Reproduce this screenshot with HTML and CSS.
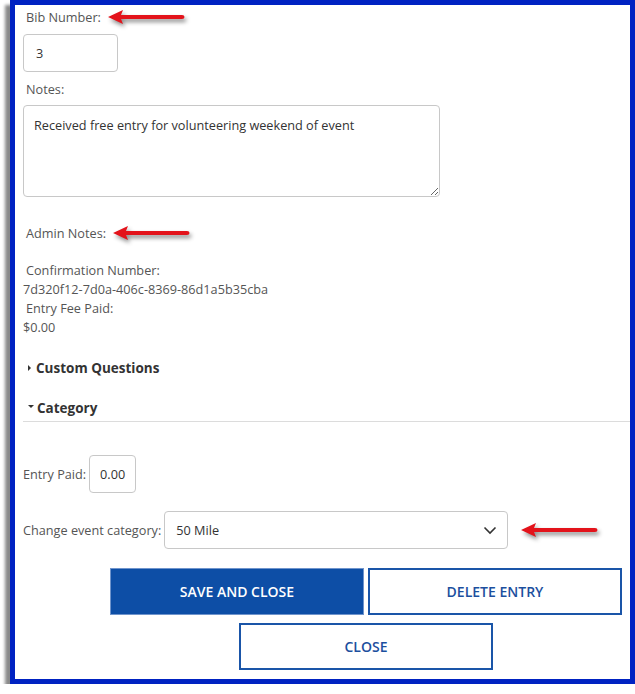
FILE: index.html
```html
<!DOCTYPE html>
<html>
<head>
  <meta charset="UTF-8">
  <title>Edit Entry</title>
  <link rel="stylesheet" href="styles.css">
</head>

<body>
  <div class="frame">

    <div class="label">Bib Number:
      <svg class="arrow" width="80" height="16" viewBox="0 0 80 16"><path d="M0 8 L15 1 L13 6 L74 6 Q76.5 6 76.5 8 Q76.5 10 74 10 L13 10 L15 15 Z" fill="#e3131b"/></svg>
    </div>
    <input class="box bib" type="text" value="3">

    <div class="label">Notes:</div>
    <textarea class="box notes">Received free entry for volunteering weekend of event</textarea>

    <div class="label admin">Admin Notes:
      <svg class="arrow" width="80" height="16" viewBox="0 0 80 16"><path d="M0 8 L15 1 L13 6 L74 6 Q76.5 6 76.5 8 Q76.5 10 74 10 L13 10 L15 15 Z" fill="#e3131b"/></svg>
    </div>

    <div class="info">
      <div class="label">Confirmation Number:</div>
      <div>7d320f12-7d0a-406c-8369-86d1a5b35cba</div>
      <div class="label">Entry Fee Paid:</div>
      <div>$0.00</div>
    </div>

    <div class="section closed">Custom Questions</div>
    <div class="section open">Category</div>
    <div class="divider"></div>

    <div class="row paid">
      <span>Entry Paid:</span>
      <input class="box amount" type="text" value="0.00">
    </div>

    <div class="row category">
      <span>Change event category:</span>
      <div class="box select">
        <span>50 Mile</span>
        <svg width="14" height="9" viewBox="0 0 14 9"><path d="M1.5 1.5 L7 7 L12.5 1.5" fill="none" stroke="#333" stroke-width="1.6"/></svg>
      </div>
      <svg class="arrow" width="80" height="16" viewBox="0 0 80 16"><path d="M0 8 L15 1 L13 6 L74 6 Q76.5 6 76.5 8 Q76.5 10 74 10 L13 10 L15 15 Z" fill="#e3131b"/></svg>
    </div>

    <div class="actions">
      <button class="btn primary">Save and Close</button>
      <button class="btn">Delete Entry</button>
      <button class="btn">Close</button>
    </div>

  </div>
</body>

</html>
```

FILE: styles.css
```css
body {
  margin: 0;
  background: #ffffff;
  font-family: 'Open Sans', sans-serif;
  font-size: 12.7px;
  color: #555555;
}

.frame {
  box-sizing: border-box;
  margin-left: 10px;
  width: 625px;
  height: 684px;
  border: 5px solid #0022c2;
  box-shadow: -5px 5px 3px #8a8a8a;
  padding: 3px 0 0 8px;
  background: #ffffff;
}

.label {
  margin-left: 3px;
  line-height: 18px;
  height: 18px;
  display: flex;
  align-items: center;
}

.arrow {
  margin-left: 7px;
  filter: drop-shadow(2px 3px 2px rgba(0, 0, 0, 0.45));
}

.box {
  box-sizing: border-box;
  border: 1px solid #c8c8c8;
  border-radius: 4px;
  background: #ffffff;
  font-family: 'Open Sans', sans-serif;
  font-size: 12.7px;
  color: #333333;
  outline: none;
}

.bib {
  display: block;
  margin: 8px 0 8px 0;
  width: 95px;
  height: 38px;
  padding: 0 12px;
}

.notes {
  display: block;
  margin-top: 7px;
  width: 417px;
  height: 92px;
  padding: 10px 10px;
  line-height: 18px;
}

.admin {
  margin-top: 27px;
}

.info {
  margin-top: 19px;
  line-height: 19px;
}

.info .label {
  height: 19px;
  line-height: 19px;
}

.section {
  margin-top: 22px;
  margin-left: 5px;
  line-height: 18px;
  font-weight: 700;
  font-size: 13.5px;
  color: #333333;
  display: flex;
  align-items: center;
}

.section::before {
  content: "";
  margin-right: 5px;
  border-style: solid;
  border-color: transparent;
}

.closed::before {
  border-width: 3px 0 3px 3px;
  border-left-color: #333333;
}

.open::before {
  border-width: 3px 3px 0 3px;
  border-top-color: #333333;
  margin-right: 3px;
  margin-bottom: 4px;
}

.divider {
  margin-top: 4px;
  border-top: 1px solid #dcdcdc;
}

.row {
  display: flex;
  align-items: center;
  gap: 3px;
}

.paid {
  margin-top: 33px;
}

.amount {
  width: 47px;
  height: 38px;
  text-align: center;
  padding: 0;
}

.category {
  margin-top: 18px;
}

.select {
  width: 344px;
  height: 38px;
  display: flex;
  align-items: center;
  justify-content: space-between;
  padding: 0 10px 0 11px;
}

.category .arrow {
  margin-left: 10px;
}

.actions {
  margin: 19px 0 0 87px;
  width: 512px;
  display: flex;
  flex-wrap: wrap;
  justify-content: center;
  gap: 8px 4px;
}

.btn {
  box-sizing: border-box;
  width: 254px;
  height: 47px;
  background: #ffffff;
  border: 2px solid #1a55a8;
  color: #1c4f9e;
  font-family: 'Open Sans', sans-serif;
  font-size: 14px;
  font-weight: 600;
  text-transform: uppercase;
  cursor: pointer;
}

.primary {
  background: #0d4ea6;
  border: 1px solid #6f94cc;
  color: #ffffff;
}
```
